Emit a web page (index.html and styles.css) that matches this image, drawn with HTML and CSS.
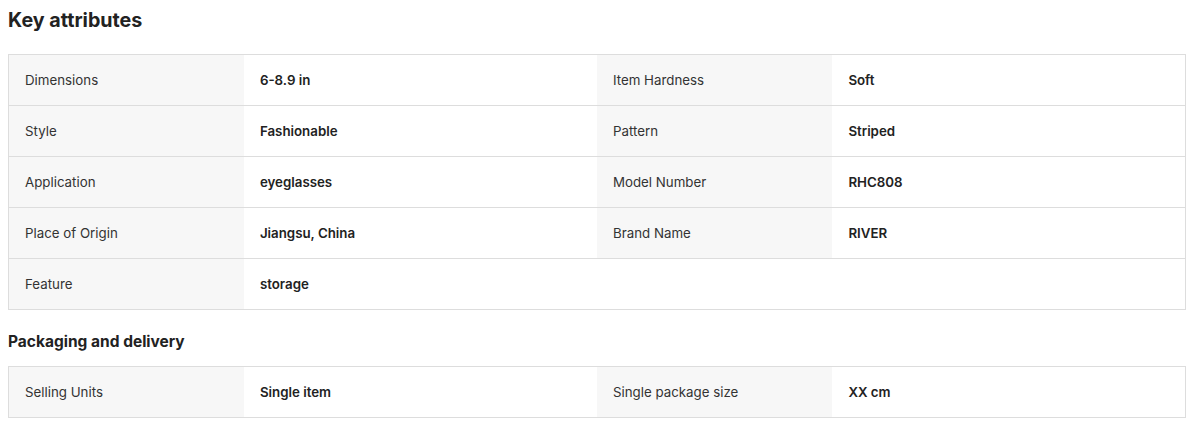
FILE: index.html
```html
<!DOCTYPE html>
<html lang="en">
<head>
    <meta charset="UTF-8">
    <meta name="viewport" content="width=device-width, initial-scale=1.0">
    <title>Key attributes</title>
    <link rel="stylesheet" href="styles.css">
</head>
<body>
    <section class="attributes">
        <h2 class="title">Key attributes</h2>
        <table class="attr-table">
            <tr>
                <td class="attr-name">Dimensions</td>
                <td class="attr-value">6-8.9 in</td>
                <td class="attr-name">Item Hardness</td>
                <td class="attr-value">Soft</td>
            </tr>
            <tr>
                <td class="attr-name">Style</td>
                <td class="attr-value">Fashionable</td>
                <td class="attr-name">Pattern</td>
                <td class="attr-value">Striped</td>
            </tr>
            <tr>
                <td class="attr-name">Application</td>
                <td class="attr-value">eyeglasses</td>
                <td class="attr-name">Model Number</td>
                <td class="attr-value">RHC808</td>
            </tr>
            <tr>
                <td class="attr-name">Place of Origin</td>
                <td class="attr-value">Jiangsu, China</td>
                <td class="attr-name">Brand Name</td>
                <td class="attr-value">RIVER</td>
            </tr>
            <tr>
                <td class="attr-name">Feature</td>
                <td class="attr-value">storage</td>
                <td class="attr-empty" colspan="2"></td>
            </tr>
        </table>

        <h3 class="subtitle">Packaging and delivery</h3>
        <table class="attr-table">
            <tr>
                <td class="attr-name">Selling Units</td>
                <td class="attr-value">Single item</td>
                <td class="attr-name">Single package size</td>
                <td class="attr-value">XX cm</td>
            </tr>
        </table>
    </section>
</body>
</html>
```

FILE: styles.css
```css
body {
    font-family: Inter, "Noto Sans", Arial, sans-serif;
    margin: 0;
    padding: 0;
    background-color: #fff;
    color: #222;
}

.attributes {
    width: 1178px;
    margin: 0 0 0 8px;
    padding-top: 8px;
}

.title {
    font-size: 19.7px;
    font-weight: 700;
    line-height: 24px;
    margin: 0 0 22px 0;
    color: #222;
}

.subtitle {
    font-size: 15.5px;
    font-weight: 700;
    line-height: 24px;
    margin: 20px 0 12px 0;
    color: #222;
}

.attr-table {
    width: 100%;
    border-collapse: collapse;
    border: 1px solid #ddd;
    table-layout: fixed;
}

.attr-table tr {
    border-bottom: 1px solid #ddd;
}

.attr-table td {
    height: 51px;
    padding: 0 16px;
    font-size: 13.3px;
    line-height: 20px;
    box-sizing: border-box;
}

.attr-name {
    width: 20%;
    background-color: #f7f7f7;
    color: #333;
    font-weight: 400;
}

.attr-value {
    width: 30%;
    color: #222;
    font-weight: 600;
}
```
